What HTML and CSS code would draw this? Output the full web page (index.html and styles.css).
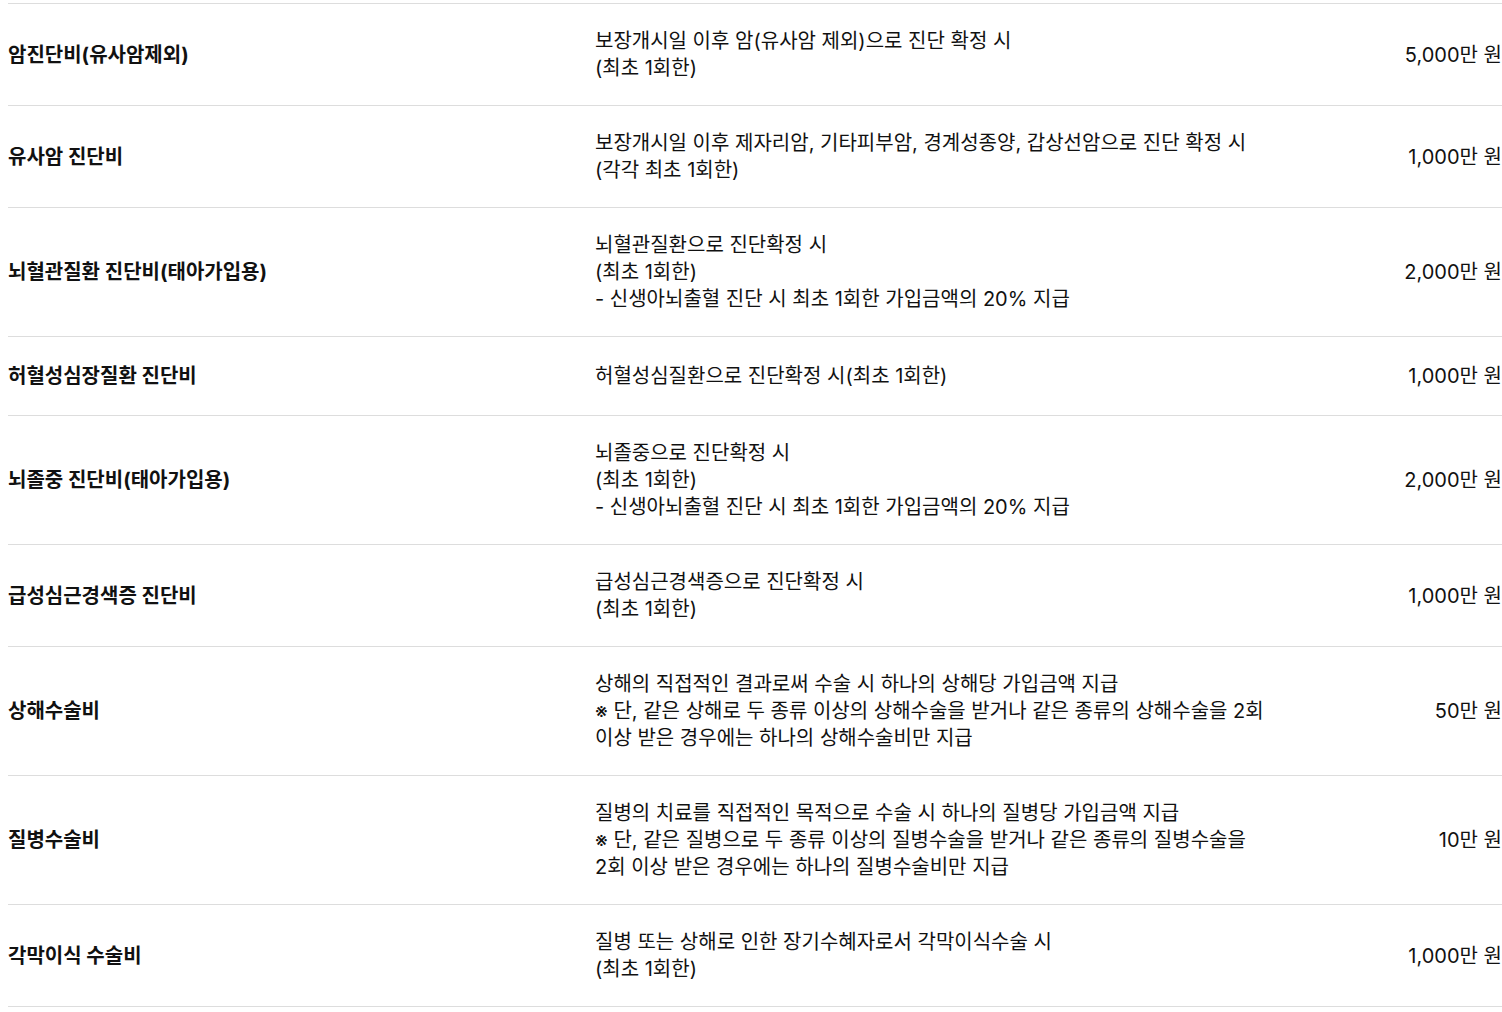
FILE: index.html
```
<!DOCTYPE html>
<html lang="ko">

<head>
    <meta charset="UTF-8">
    <meta name="viewport" content="width=device-width, initial-scale=1.0">
    <title>보장내용</title>
    <link rel="stylesheet" href="styles.css">
</head>

<body>
    <div class="cover-list">
        <div class="cover-row">
            <div class="cover-name">암진단비(유사암제외)</div>
            <div class="cover-desc">보장개시일 이후 암(유사암 제외)으로 진단 확정 시<br>(최초 1회한)</div>
            <div class="cover-amount">5,000만 원</div>
        </div>
        <div class="cover-row">
            <div class="cover-name">유사암 진단비</div>
            <div class="cover-desc">보장개시일 이후 제자리암, 기타피부암, 경계성종양, 갑상선암으로 진단 확정 시<br>(각각 최초 1회한)</div>
            <div class="cover-amount">1,000만 원</div>
        </div>
        <div class="cover-row">
            <div class="cover-name">뇌혈관질환 진단비(태아가입용)</div>
            <div class="cover-desc">뇌혈관질환으로 진단확정 시<br>(최초 1회한)<br>- 신생아뇌출혈 진단 시 최초 1회한 가입금액의 20% 지급</div>
            <div class="cover-amount">2,000만 원</div>
        </div>
        <div class="cover-row">
            <div class="cover-name">허혈성심장질환 진단비</div>
            <div class="cover-desc">허혈성심질환으로 진단확정 시(최초 1회한)</div>
            <div class="cover-amount">1,000만 원</div>
        </div>
        <div class="cover-row">
            <div class="cover-name">뇌졸중 진단비(태아가입용)</div>
            <div class="cover-desc">뇌졸중으로 진단확정 시<br>(최초 1회한)<br>- 신생아뇌출혈 진단 시 최초 1회한 가입금액의 20% 지급</div>
            <div class="cover-amount">2,000만 원</div>
        </div>
        <div class="cover-row">
            <div class="cover-name">급성심근경색증 진단비</div>
            <div class="cover-desc">급성심근경색증으로 진단확정 시<br>(최초 1회한)</div>
            <div class="cover-amount">1,000만 원</div>
        </div>
        <div class="cover-row">
            <div class="cover-name">상해수술비</div>
            <div class="cover-desc">상해의 직접적인 결과로써 수술 시 하나의 상해당 가입금액 지급<br>※ 단, 같은 상해로 두 종류 이상의 상해수술을 받거나 같은 종류의 상해수술을 2회 이상 받은 경우에는 하나의 상해수술비만 지급</div>
            <div class="cover-amount">50만 원</div>
        </div>
        <div class="cover-row">
            <div class="cover-name">질병수술비</div>
            <div class="cover-desc">질병의 치료를 직접적인 목적으로 수술 시 하나의 질병당 가입금액 지급<br>※ 단, 같은 질병으로 두 종류 이상의 질병수술을 받거나 같은 종류의 질병수술을 2회 이상 받은 경우에는 하나의 질병수술비만 지급</div>
            <div class="cover-amount">10만 원</div>
        </div>
        <div class="cover-row">
            <div class="cover-name">각막이식 수술비</div>
            <div class="cover-desc">질병 또는 상해로 인한 장기수혜자로서 각막이식수술 시<br>(최초 1회한)</div>
            <div class="cover-amount">1,000만 원</div>
        </div>
    </div>
</body>

</html>
```

FILE: styles.css
```
body {
    margin: 3px 0 0 8px;
    font-family: Inter, "Noto Sans CJK KR", sans-serif;
    color: #111;
    background: #fff;
}

.cover-list {
    border-top: 1px solid #ddd;
}

.cover-row {
    display: grid;
    grid-template-columns: 587px 675px 1fr;
    align-items: center;
    padding: 24px 0 23px;
    border-bottom: 1px solid #ddd;
}

.cover-name {
    font-size: 20px;
    font-weight: 700;
    line-height: 31px;
}

.cover-desc {
    font-size: 20px;
    line-height: 27px;
    word-break: keep-all;
}

.cover-amount {
    font-size: 20px;
    line-height: 27px;
    text-align: right;
    white-space: nowrap;
}
```
